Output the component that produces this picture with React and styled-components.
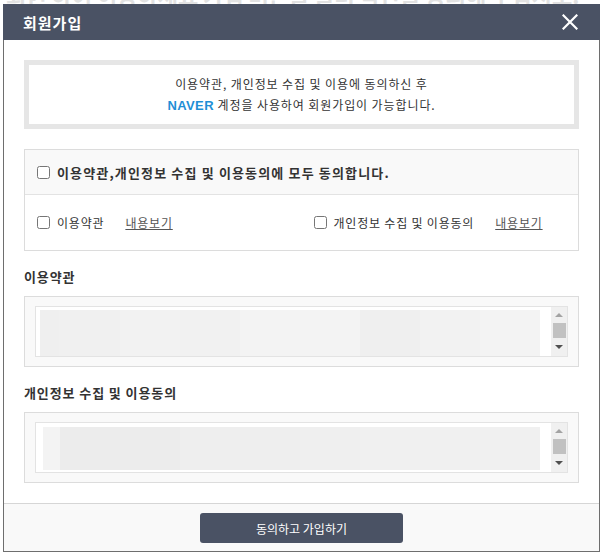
import React from 'react';
import styled, { createGlobalStyle } from 'styled-components';

const GlobalStyle = createGlobalStyle`
  html, body { margin: 0; padding: 0; background: #fff; }
  body {
    font-family: "Noto Sans CJK KR", "Liberation Sans", sans-serif;
    font-size: 12px;
    color: #333;
  }
`;

const Page = styled.div`
  position: relative;
  width: 601px;
  height: 553px;
  overflow: hidden;
`;

// 모달 뒤쪽 페이지 글자 (위쪽 몇 px만 보임)
const BackText = styled.div`
  margin-top: -22px;
  padding-left: 6px;
  font-size: 22px;
  font-weight: 700;
  color: #e2e2e2;
  white-space: nowrap;
`;

const Modal = styled.div`
  position: absolute;
  top: 4px;
  left: 3px;
  width: 597px;
  box-sizing: border-box;
  border: 1px solid #6e6e6e;
  border-top: 0;
  background: #fff;
  display: flex;
  flex-direction: column;
`;

const Header = styled.div`
  height: 36px;
  margin: 0 -1px;
  background: #4a5264;
  display: flex;
  align-items: center;
  justify-content: space-between;
  padding: 0 22px 0 20px;
`;

const Title = styled.h1`
  margin: 0;
  font-size: 15px;
  font-weight: 700;
  letter-spacing: 1px;
  color: #fff;
`;

const CloseButton = styled.button`
  border: 0;
  padding: 0;
  background: none;
  width: 16px;
  height: 16px;
  display: flex;
  cursor: pointer;
`;

const Body = styled.div`
  padding: 20px 20px 20px;
`;

const Notice = styled.div`
  border: 5px solid #e6e6e6;
  padding: 8px 0;
  text-align: center;
  line-height: 21px;
  letter-spacing: 0.9px;
  color: #333;
`;

const Naver = styled.b`
  color: #1f8fd6;
  font-family: "Liberation Sans", sans-serif;
  font-size: 13px;
  letter-spacing: 0.4px;
`;

const CheckPanel = styled.div`
  margin-top: 20px;
  border: 1px solid #dcdcdc;
`;

const AllRow = styled.label`
  height: 44px;
  background: #f9f9f9;
  border-bottom: 1px solid #e3e3e3;
  display: flex;
  align-items: center;
  padding-left: 12px;
  font-size: 13px;
  font-weight: 700;
  letter-spacing: 1.15px;
`;

const ItemRow = styled.div`
  height: 55px;
  display: grid;
  grid-template-columns: 1fr 1fr;
  align-items: center;
  letter-spacing: 0.8px;
`;

const Item = styled.div`
  display: flex;
  align-items: center;
  padding-left: 12px;
`;

const Check = styled.input`
  margin: 0 7px 0 0;
  width: 13px;
  height: 13px;
`;

const ViewLink = styled.a`
  margin-left: 21px;
  color: #555;
  text-decoration: underline;
  cursor: pointer;
`;

const SectionTitle = styled.h2`
  margin: 0 0 10px;
  padding-top: 17px;
  line-height: 18px;
  font-size: 13px;
  font-weight: 700;
  letter-spacing: 0.9px;
  color: #333;
`;

const ScrollBox = styled.div`
  border: 1px solid #dcdcdc;
  background: #f9f9f9;
  padding: 9px 10px;
`;

const ScrollInner = styled.div`
  height: 51px;
  box-sizing: border-box;
  border: 1px solid #e3e3e3;
  background: #fff;
  display: flex;
`;

const ScrollContent = styled.div`
  flex: 1;
  overflow: hidden;
  padding: ${p => p.$top}px 10px 0 ${p => p.$left}px;
`;

const Blur = styled.div`
  display: flex;
  height: ${p => p.$h}px;
`;

const BlurCell = styled.div`
  width: ${p => p.$w}px;
  background: ${p => p.$c};
`;

const HiddenLine = styled.div`
  margin-top: 1px;
  line-height: 14px;
  color: #666;
  letter-spacing: 0.8px;
  white-space: nowrap;
`;

const ScrollBar = styled.div`
  width: 16px;
  background: #f0f0f0;
  display: flex;
  flex-direction: column;
  align-items: center;
  padding-top: 6px;
`;

const ArrowUp = styled.div`
  width: 0;
  height: 0;
  border-left: 4px solid transparent;
  border-right: 4px solid transparent;
  border-bottom: 4px solid #a3a3a3;
`;

const ArrowDown = styled.div`
  width: 0;
  height: 0;
  border-left: 4px solid transparent;
  border-right: 4px solid transparent;
  border-top: 4px solid #505050;
`;

const Thumb = styled.div`
  width: 13px;
  height: 15px;
  margin: 6px 0 7px 1px;
  background: #c1c1c1;
`;

const Footer = styled.div`
  border-top: 1px solid #d6d6d6;
  background: #f9f9f9;
  padding: 9px 0 8px;
  display: flex;
  justify-content: center;
`;

const JoinButton = styled.button`
  width: 203px;
  height: 30px;
  border: 0;
  border-radius: 3px;
  background: #4a5264;
  color: #fff;
  font-family: inherit;
  font-size: 12px;
  cursor: pointer;
`;

const termsBlur = [
  [19, '#efefef'], [61, '#f0f0f0'], [60, '#f2f2f2'], [60, '#f1f1f1'], [60, '#f3f3f3'],
  [60, '#f3f3f3'], [60, '#efefef'], [60, '#f2f2f2'], [60, '#f3f3f3'],
];

const privacyBlur = [
  [17, '#f3f3f3'], [120, '#ececec'], [120, '#eeeeee'], [60, '#efefef'], [60, '#f0f0f0'], [120, '#f0f0f0'],
];

const TermsBox = ({ cells, top, left, height, tail }) => (
  <ScrollBox>
    <ScrollInner>
      <ScrollContent $top={top} $left={left}>
        <Blur $h={height}>
          {cells.map(([w, c], i) => <BlurCell key={i} $w={w} $c={c} />)}
        </Blur>
        {tail && <HiddenLine>{tail}</HiddenLine>}
      </ScrollContent>
      <ScrollBar>
        <ArrowUp />
        <Thumb />
        <ArrowDown />
      </ScrollBar>
    </ScrollInner>
  </ScrollBox>
);

const App = () => {
  return (
    <Page>
      <GlobalStyle />
      <BackText>회원 하여 이용하세요 가입 버튼을 눌러 약관을 동의해 주십시오.</BackText>
      <Modal>
        <Header>
          <Title>회원가입</Title>
          <CloseButton aria-label="닫기">
            <svg width="16" height="16" viewBox="0 0 16 16">
              <path d="M1.5 1.5 L14.5 14.5 M14.5 1.5 L1.5 14.5" stroke="#fff" strokeWidth="2.2" strokeLinecap="square" />
            </svg>
          </CloseButton>
        </Header>
        <Body>
          <Notice>
            이용약관, 개인정보 수집 및 이용에 동의하신 후<br />
            <Naver>NAVER</Naver> 계정을 사용하여 회원가입이 가능합니다.
          </Notice>

          <CheckPanel>
            <AllRow>
              <Check type="checkbox" />
              이용약관,개인정보 수집 및 이용동의에 모두 동의합니다.
            </AllRow>
            <ItemRow>
              <Item>
                <Check type="checkbox" />
                이용약관
                <ViewLink>내용보기</ViewLink>
              </Item>
              <Item>
                <Check type="checkbox" />
                개인정보 수집 및 이용동의
                <ViewLink>내용보기</ViewLink>
              </Item>
            </ItemRow>
          </CheckPanel>

          <SectionTitle>이용약관</SectionTitle>
          <TermsBox cells={termsBlur} top={3} left={4} height={46} />

          <SectionTitle>개인정보 수집 및 이용동의</SectionTitle>
          <TermsBox cells={privacyBlur} top={4} left={7} height={43} tail="이미 사용하시기 바랍니다 후" />
        </Body>
        <Footer>
          <JoinButton>동의하고 가입하기</JoinButton>
        </Footer>
      </Modal>
    </Page>
  );
};

export default App;
